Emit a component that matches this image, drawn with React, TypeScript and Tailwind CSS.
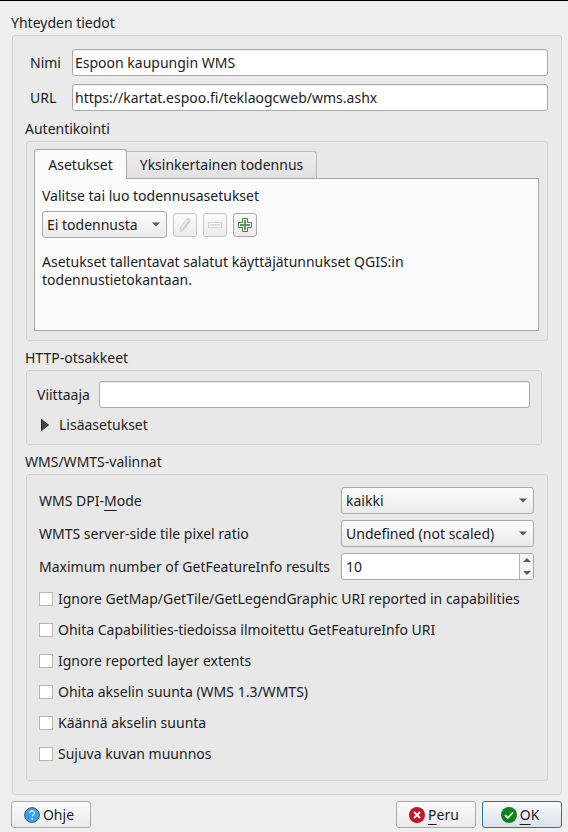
import { useId, useState } from "react";
import type { ReactNode } from "react";

const FIELD =
  "h-[27px] min-w-0 rounded-[3px] border border-[#a9a9a9] bg-white px-[2px] text-sm outline-none shadow-[inset_0_1px_0_#ececec]";
const TOOL =
  "flex size-6 items-center justify-center rounded-[3px] border bg-linear-to-b from-[#fbfbfb] to-[#ececec]";
const DIALOG_BUTTON =
  "flex h-[27px] w-20 items-center justify-center gap-[3px] rounded-[3px] border bg-linear-to-b pr-1 text-sm";

const WMS_OPTIONS = [
  "Ignore GetMap/GetTile/GetLegendGraphic URI reported in capabilities",
  "Ohita Capabilities-tiedoissa ilmoitettu GetFeatureInfo URI",
  "Ignore reported layer extents",
  "Ohita akselin suunta (WMS 1.3/WMTS)",
  "Käännä akselin suunta",
  "Sujuva kuvan muunnos",
];

function Key({ children }: { children: ReactNode }) {
  return <span className="underline decoration-1 underline-offset-[4px]">{children}</span>;
}

function Group({
  title,
  className,
  boxClass,
  children,
}: {
  title: string;
  className?: string;
  boxClass: string;
  children: ReactNode;
}) {
  const id = useId();
  return (
    <section aria-labelledby={id} className={className}>
      <h2 id={id} className="h-[22px] leading-5">
        {title}
      </h2>
      <div className={`ml-px rounded-[3px] border border-[#d2d2d2] ${boxClass}`}>{children}</div>
    </section>
  );
}

function Combo({
  id,
  label,
  options,
  className,
}: {
  id?: string;
  label?: string;
  options: string[];
  className: string;
}) {
  return (
    <div className={`relative ${className}`}>
      <select
        id={id}
        aria-label={label}
        className="h-[27px] w-full appearance-none rounded-[3px] border border-[#a9a9a9] bg-linear-to-b from-[#fcfcfc] to-[#ebebeb] pr-5 pl-1 text-sm outline-none"
      >
        {options.map((o) => (
          <option key={o}>{o}</option>
        ))}
      </select>
      <svg className="pointer-events-none absolute top-[11px] right-[7px]" width="8" height="5" viewBox="0 0 8 5">
        <path d="M0 0.5h8L4 4.5z" fill="#5a5a5a" />
      </svg>
    </div>
  );
}

export default function App() {
  const [nimi, setNimi] = useState("Espoon kaupungin WMS");
  const [url, setUrl] = useState("https://kartat.espoo.fi/teklaogcweb/wms.ashx");
  const [count, setCount] = useState(10);

  return (
    <form
      onSubmit={(e) => e.preventDefault()}
      className="min-h-screen border-t border-black bg-[#efefef] pt-[12px] pr-[6px] pb-1 pl-[11px] font-['Noto_Sans',sans-serif] text-sm text-[#1c1c1c]"
    >
      <Group title="Yhteyden tiedot" boxClass="bg-[#ebebeb] py-[13px] pr-[13px] pl-3">
        <div className="grid grid-cols-[42px_1fr] items-center gap-y-2 pl-[5px]">
          <label htmlFor="nimi">Nimi</label>
          <input id="nimi" className={FIELD} value={nimi} onChange={(e) => setNimi(e.target.value)} />
          <label htmlFor="url">URL</label>
          <input id="url" className={FIELD} value={url} onChange={(e) => setUrl(e.target.value)} />
        </div>

        <Group title="Autentikointi" className="mt-2" boxClass="bg-[#e8e8e8] pt-[7px] pr-2 pb-[9px] pl-[7px]">
          <div role="tablist" className="flex items-end">
            <button
              type="button"
              role="tab"
              aria-selected="true"
              className="z-10 -mb-px h-[30px] w-[93px] rounded-t-[3px] border border-b-0 border-[#a9a9a9] bg-[#fbfbfb]"
            >
              Asetukset
            </button>
            <button
              type="button"
              role="tab"
              aria-selected="false"
              className="h-[27px] w-[190px] rounded-tr-[3px] border border-b-0 border-l-0 border-[#bababa] bg-linear-to-b from-[#ededed] to-[#e2e2e2]"
            >
              Yksinkertainen todennus
            </button>
          </div>
          <div role="tabpanel" className="h-[153px] border border-[#a9a9a9] bg-[#fbfbfb] px-[7px] pt-2">
            <p className="leading-[18px]">Valitse tai luo todennusasetukset</p>
            <div className="mt-[6px] flex items-center gap-[6px]">
              <Combo label="Todennus" options={["Ei todennusta"]} className="w-[125px]" />
              <button type="button" aria-label="Muokkaa" disabled className={`${TOOL} border-[#c6c6c6]`}>
                <svg width="14" height="16" viewBox="0 0 14 16">
                  <path d="M9.5 1.2L12.3 2.2 12 4.5 5.6 13 2 15l.2-4.2z" fill="#d9d9d4" stroke="#cfcfca" strokeWidth=".6" />
                  <path d="M9.4 3.2L3.8 11.2" stroke="#efefeb" strokeWidth="1.2" />
                  <path d="M11.3 4.4L5.6 12" stroke="#c6c6c0" strokeWidth="1" />
                </svg>
              </button>
              <button type="button" aria-label="Poista" disabled className={`${TOOL} border-[#c6c6c6]`}>
                <svg width="14" height="6" viewBox="0 0 14 6">
                  <rect x=".5" y=".5" width="13" height="5" fill="#fff" stroke="#dccfcf" />
                  <path d="M2 3h10" stroke="#e6d8d8" strokeWidth="2" />
                </svg>
              </button>
              <button type="button" aria-label="Lisää" className={`${TOOL} border-[#a9a9a9]`}>
                <svg width="14" height="14" viewBox="0 0 14 14">
                  <path d="M4.5.5h5v4h4v5h-4v4h-5v-4h-4v-5h4z" fill="#fff" stroke="#3f7f46" />
                  <path d="M7 2v10M2 7h10" stroke="#5a9a5c" strokeWidth="2" />
                </svg>
              </button>
            </div>
            <p className="mt-[15px] leading-[18px]">
              Asetukset tallentavat salatut käyttäjätunnukset QGIS:in
              <br />
              todennustietokantaan.
            </p>
          </div>
        </Group>

        <Group title="HTTP-otsakkeet" className="mt-[7px] mr-[6px]" boxClass="bg-[#e8e8e8] py-[10px] pr-[11px] pl-[10px]">
          <div className="flex items-center">
            <label htmlFor="viittaaja" className="w-[62px]">
              Viittaaja
            </label>
            <input id="viittaaja" className={`${FIELD} flex-1`} />
          </div>
          <button type="button" aria-expanded="false" className="mt-2 ml-1 flex items-center gap-[10px] leading-[18px]">
            <svg width="8" height="12" viewBox="0 0 8 12">
              <path d="M.5.5L7.5 6 .5 11.5z" fill="#444" stroke="#222" />
            </svg>
            Lisäasetukset
          </button>
        </Group>

        <Group title="WMS/WMTS-valinnat" className="mt-[7px]" boxClass="bg-[#e8e8e8] pt-3 pr-[13px] pb-[17px] pl-3">
          <div className="grid grid-cols-[1fr_193px] items-center gap-[6px]">
            <label htmlFor="dpi">
              WMS DPI-<Key>M</Key>ode
            </label>
            <Combo id="dpi" options={["kaikki"]} className="w-full" />
            <label htmlFor="ratio">WMTS server-side tile pixel ratio</label>
            <Combo id="ratio" options={["Undefined (not scaled)"]} className="w-full" />
            <label htmlFor="max" className="whitespace-nowrap">
              Maximum number of GetFeatureInfo results
            </label>
            <div className="flex h-[27px] overflow-hidden rounded-[3px] border border-[#a9a9a9] bg-white">
              <input
                id="max"
                inputMode="numeric"
                value={count}
                onChange={(e) => setCount(Number(e.target.value) || 0)}
                className="min-w-0 flex-1 px-1 outline-none"
              />
              <div className="flex w-[14px] flex-col border-l border-[#b4b4b4] bg-[#f6f6f6]">
                <button
                  type="button"
                  aria-label="Lisää yksi"
                  onClick={() => setCount(count + 1)}
                  className="flex flex-1 items-center justify-center"
                >
                  <svg width="8" height="4" viewBox="0 0 8 4">
                    <path d="M0 4h8L4 0z" fill="#5a5a5a" />
                  </svg>
                </button>
                <button
                  type="button"
                  aria-label="Vähennä yksi"
                  onClick={() => setCount(count - 1)}
                  className="flex flex-1 items-center justify-center"
                >
                  <svg width="8" height="4" viewBox="0 0 8 4">
                    <path d="M0 0h8L4 4z" fill="#5a5a5a" />
                  </svg>
                </button>
              </div>
            </div>
          </div>
          <div className="mt-[10px] flex flex-col gap-[13px]">
            {WMS_OPTIONS.map((text) => (
              <label key={text} className="flex items-center gap-[5px] leading-[18px] whitespace-nowrap">
                <input
                  type="checkbox"
                  className="size-[14px] shrink-0 appearance-none border border-[#b6b6b6] bg-white checked:bg-[#308cc6]"
                />
                {text}
              </label>
            ))}
          </div>
        </Group>
      </Group>

      <div className="mt-[6px] flex gap-[6px]">
        <button type="button" className={`${DIALOG_BUTTON} mr-auto border-[#a9a9a9] from-[#fcfcfc] to-[#ebebeb]`}>
          <svg width="16" height="16" viewBox="0 0 16 16">
            <circle cx="8" cy="8" r="7.4" fill="#34a3e6" stroke="#4c5a66" />
            <path d="M5.8 6.2c0-3 4.6-2.9 4.6-.2 0 1.7-2.2 1.8-2.2 3.6" fill="none" stroke="#d8efff" strokeWidth="1.3" />
            <circle cx="8.2" cy="12" r=".9" fill="#d8efff" />
          </svg>
          Ohje
        </button>
        <button type="button" className={`${DIALOG_BUTTON} border-[#a9a9a9] from-[#fcfcfc] to-[#ebebeb]`}>
          <svg width="16" height="16" viewBox="0 0 16 16">
            <circle cx="8" cy="8" r="8" fill="#c7162b" />
            <path d="M5 5l6 6M11 5l-6 6" stroke="#fff" strokeWidth="1.8" />
          </svg>
          <span>
            <Key>P</Key>eru
          </span>
        </button>
        <button type="submit" className={`${DIALOG_BUTTON} border-[#2e719b] from-[#fafbfc] to-[#dae1ea]`}>
          <svg width="16" height="16" viewBox="0 0 16 16">
            <circle cx="8" cy="8" r="8" fill="#0e8420" />
            <path d="M4 8.2l2.8 2.7L12 5.5" fill="none" stroke="#fff" strokeWidth="1.7" />
          </svg>
          <span>
            <Key>O</Key>K
          </span>
        </button>
      </div>
    </form>
  );
}
